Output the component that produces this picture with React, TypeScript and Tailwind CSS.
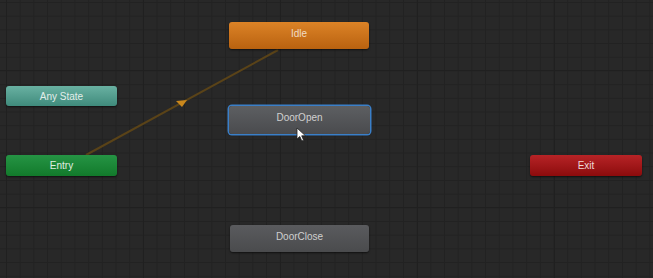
const nodes = [
  { name: "Idle", cls: "left-[229px] top-[22px] w-[140px] h-[27px] pb-[5px] bg-gradient-to-b from-[#dc8326] to-[#b9620f] text-[#f0dcc6]" },
  { name: "Any State", cls: "left-[6px] top-[86px] w-[111px] h-[20px] bg-gradient-to-b from-[#69b1a2] to-[#3f8b7c] text-[#e2eeea]" },
  { name: "DoorOpen", cls: "left-[229px] top-[106px] w-[141px] h-[28px] pb-[6px] bg-gradient-to-b from-[#5d5f62] to-[#4a4b4e] text-[#d0d0d0] ring-[1.5px] ring-[#3a7fc8] shadow-[0_0_3px_#2d6fb5]" },
  { name: "Entry", cls: "left-[6px] top-[155px] w-[111px] h-[21px] bg-gradient-to-b from-[#259444] to-[#127a2b] text-[#e0eee2]" },
  { name: "Exit", cls: "left-[530px] top-[155px] w-[112px] h-[21px] bg-gradient-to-b from-[#b72326] to-[#8c0b0c] text-[#eed8d8]" },
  { name: "DoorClose", cls: "left-[230px] top-[225px] w-[139px] h-[27px] pb-[5px] bg-gradient-to-b from-[#5a5b5e] to-[#4a4b4d] text-[#cfcfcf]" },
];

export default function App() {
  return (
    <div className="relative w-[653px] h-[278px] overflow-hidden bg-[#282828] font-['Liberation_Sans',Arial,sans-serif]">
      <div className="absolute inset-0 bg-[linear-gradient(to_right,#222222_1px,transparent_1px),linear-gradient(to_bottom,#222222_1px,transparent_1px)] bg-[size:13.7px_13.7px] bg-[position:6px_2px]" />
      <div className="absolute inset-0 bg-[linear-gradient(to_right,#202020_1px,transparent_1px),linear-gradient(to_bottom,#202020_1px,transparent_1px)] bg-[size:137px_137px] bg-[position:6px_70px]" />

      <svg className="absolute inset-0" width="653" height="278">
        <line x1="86" y1="155" x2="278" y2="50" stroke="#5a4318" strokeWidth="2" />
        <polygon points="176,101 187,100 182,107" fill="#c9871c" />
      </svg>

      {nodes.map((n) => (
        <div
          key={n.name}
          className={`absolute flex items-center justify-center rounded-[3px] text-[10px] shadow-[0_1px_2px_rgba(0,0,0,0.6)] ${n.cls}`}
        >
          {n.name}
        </div>
      ))}

      <svg className="absolute left-[296px] top-[127px]" width="12" height="16" viewBox="0 0 12 16">
        <path d="M1 1 L1 12 L3.8 9.5 L5.8 14 L7.6 13.2 L5.7 8.8 L9.5 8.8 Z" fill="#ffffff" stroke="#222" strokeWidth="0.8" />
      </svg>
    </div>
  );
}
